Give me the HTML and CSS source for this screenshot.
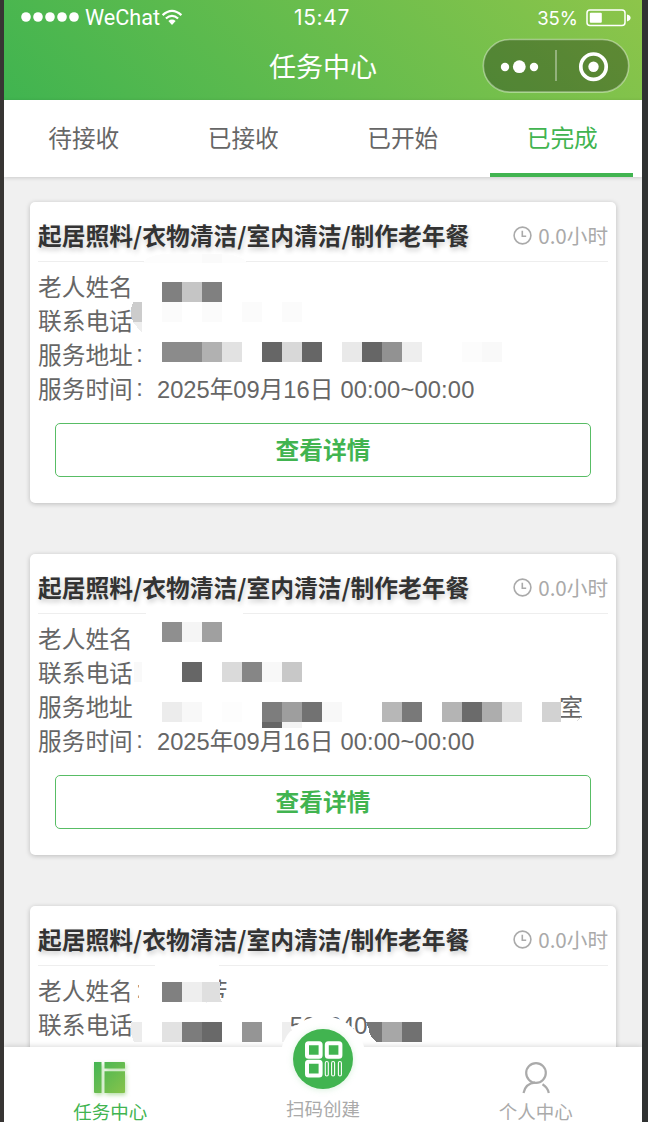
FILE: index.html
```html
<!DOCTYPE html>
<html lang="zh-CN">
<head>
<meta charset="utf-8">
<title>任务中心</title>
<link rel="stylesheet" href="styles.css">
</head>
<body>
<div class="phone">
  <header class="header">
    <div class="status">
      <div class="carrier">
        <svg width="58" height="10" viewBox="0 0 58 10" fill="#fff"><circle cx="5" cy="5" r="4.8"/><circle cx="17" cy="5" r="4.8"/><circle cx="29" cy="5" r="4.8"/><circle cx="41" cy="5" r="4.8"/><circle cx="53" cy="5" r="4.8"/></svg>
        <span class="carrier-name">WeChat</span>
        <svg class="wifi" width="22" height="17" viewBox="0 0 22 17" fill="none" stroke="#fff" stroke-width="2.3"><path d="M1.6 6.2Q11 -2.4 20.4 6.2M4.9 9.5Q11 4.2 17.1 9.5"/><path d="M7.4 12Q11 9.2 14.6 12L11 16Z" fill="#fff" stroke="none"/></svg>
      </div>
      <span class="time">15:47</span>
      <div class="battery">
        <span>35%</span>
        <svg width="46" height="18" viewBox="0 0 46 18"><rect x="1" y="1" width="38" height="15.6" rx="3" fill="none" stroke="#fff" stroke-width="1.5"/><rect x="3.8" y="3.8" width="12" height="10" rx="1" fill="#fff"/><path d="M41 5.4Q44.6 6 44.6 8.8T41 12.4Z" fill="#fff"/></svg>
      </div>
    </div>
    <div class="nav">
      <h1 class="nav-title">任务中心</h1>
      <svg class="capsule" width="148" height="56" viewBox="0 0 148 56"><rect x="1.3" y="1.5" width="145.4" height="52.6" rx="26.3" fill="#000" fill-opacity=".3" stroke="#fff" stroke-opacity=".38" stroke-width="1.6"/><g fill="#fff"><circle cx="23" cy="29" r="4.2"/><circle cx="37.3" cy="28.7" r="6.4"/><circle cx="52" cy="29" r="4.2"/><circle cx="111.5" cy="28.7" r="5.2"/></g><circle cx="111.5" cy="28.7" r="12.7" fill="none" stroke="#fff" stroke-width="3.7"/><path d="M74 12V43" stroke="#fff" stroke-opacity=".45" stroke-width="1.6"/></svg>
    </div>
  </header>
  <nav class="tabs">
    <div class="tab">待接收</div>
    <div class="tab">已接收</div>
    <div class="tab">已开始</div>
    <div class="tab active">已完成</div>
  </nav>
  <main class="list">
    <section class="card">
      <div class="card-head">
        <h2>起居照料/衣物清洁/室内清洁/制作老年餐</h2>
        <div class="hours"><svg width="19" height="19" viewBox="0 0 19 19" fill="none" stroke="#aaa" stroke-width="1.6"><circle cx="9.5" cy="9.5" r="8.4"/><path d="M9.3 4.8V10.3H13.2"/></svg><span>0.0小时</span></div>
      </div>
      <div class="rows">
        <div class="row">老人姓名</div>
        <div class="row">联系电话</div>
        <div class="row">服务地址<i>:</i></div>
        <div class="row">服务时间<i>:</i><span class="date">2025年09月16日</span><span class="clock">00:00~00:00</span></div>
      </div>
      <button class="detail">查看详情</button>
      <svg class="mask" viewBox="30 202 586 301" width="586" height="301" shape-rendering="crispEdges">
        <path d="M142 263Q148 255 165 254H225Q240 255 248 263Z" fill="#fdfdfd"/>
        <path d="M202 254h20v9h-20z" fill="#fafafa"/>
        <path d="M133 302h9v20h-9q-4-10 0-20z" fill="#ccc"/><path d="M133 322h9v11z" fill="#eee"/>
        <path d="M162 282h20v20h-20zM202 282h20v20h-20z" fill="#808080"/><path d="M182 282h20v20h-20z" fill="#c5c5c5"/>
        <path d="M162 302h20v20h-20zM202 302h20v20h-20zM242 302h20v20h-20zM282 302h20v20h-20z" fill="#fbfbfb"/>
        <path d="M162 342h40v20h-40z" fill="#8b8b8b"/><path d="M202 342h20v20h-20z" fill="#b1b1b1"/><path d="M222 342h20v20h-20z" fill="#e2e2e2"/>
        <path d="M262 342h20v20h-20zM302 342h20v20h-20zM362 342h20v20h-20z" fill="#666"/><path d="M282 342h20v20h-20z" fill="#d8d8d8"/><path d="M342 342h20v20h-20z" fill="#e9e9e9"/><path d="M382 342h20v20h-20z" fill="#929292"/><path d="M402 342h20v20h-20z" fill="#eee"/><path d="M462 342h40v20h-40z" fill="#fcfcfc"/><path d="M482 342h20v20h-20z" fill="#f9f9f9"/>
      </svg>
    </section>
    <section class="card">
      <div class="card-head">
        <h2>起居照料/衣物清洁/室内清洁/制作老年餐</h2>
        <div class="hours"><svg width="19" height="19" viewBox="0 0 19 19" fill="none" stroke="#aaa" stroke-width="1.6"><circle cx="9.5" cy="9.5" r="8.4"/><path d="M9.3 4.8V10.3H13.2"/></svg><span>0.0小时</span></div>
      </div>
      <div class="rows">
        <div class="row">老人姓名</div>
        <div class="row">联系电话</div>
        <div class="row split"><span>服务地址</span><span class="room">室</span></div>
        <div class="row">服务时间<i>:</i><span class="date">2025年09月16日</span><span class="clock">00:00~00:00</span></div>
      </div>
      <button class="detail">查看详情</button>
      <svg class="mask" viewBox="30 554 586 301" width="586" height="301" shape-rendering="crispEdges">
        <path d="M146 611h97v4h-97z" fill="#fff"/>
        <path d="M162 622h20v20h-20z" fill="#8f8f8f"/><path d="M182 622h20v20h-20z" fill="#f5f5f5"/><path d="M202 622h20v20h-20z" fill="#a0a0a0"/>
        <path d="M134 662h8v20h-8z" fill="#f9f9f9"/><path d="M182 662h20v20h-20z" fill="#666"/><path d="M222 662h20v20h-20z" fill="#dadada"/><path d="M242 662h20v20h-20z" fill="#868686"/><path d="M262 662h20v20h-20z" fill="#f8f8f8"/><path d="M282 662h20v20h-20z" fill="#c8c8c8"/>
        <path d="M162 702h20v20h-20z" fill="#ececec"/><path d="M182 702h20v20h-20zM322 702h20v20h-20z" fill="#f8f8f8"/><path d="M222 702h20v20h-20z" fill="#fdfdfd"/><path d="M262 702h20v20h-20z" fill="#7d7d7d"/><path d="M282 702h20v20h-20z" fill="#9e9e9e"/><path d="M302 702h20v20h-20z" fill="#727272"/><path d="M262 722h20v6h-20z" fill="#666"/><path d="M282 722h20v6h-20z" fill="#f3f3f3"/>
        <path d="M382 702h20v20h-20z" fill="#b7b7b7"/><path d="M402 702h20v20h-20z" fill="#797979"/><path d="M442 702h20v20h-20z" fill="#b4b4b4"/><path d="M462 702h20v20h-20z" fill="#6b6b6b"/><path d="M482 702h20v20h-20z" fill="#adadad"/><path d="M502 702h20v20h-20z" fill="#e1e1e1"/><path d="M542 702h19v20h-19z" fill="#d2d2d2"/>
        <path d="M577 721L581 717" stroke="#ddd"/>
      </svg>
    </section>
    <section class="card">
      <div class="card-head">
        <h2>起居照料/衣物清洁/室内清洁/制作老年餐</h2>
        <div class="hours"><svg width="19" height="19" viewBox="0 0 19 19" fill="none" stroke="#aaa" stroke-width="1.6"><circle cx="9.5" cy="9.5" r="8.4"/><path d="M9.3 4.8V10.3H13.2"/></svg><span>0.0小时</span></div>
      </div>
      <div class="rows">
        <div class="row">老人姓名<i>:</i><span class="surname">芳</span></div>
        <div class="row">联系电话<span class="number">5000409</span></div>
      </div>
      <svg class="mask" viewBox="30 906 586 301" width="586" height="301" shape-rendering="crispEdges">
        <path d="M155 963h64v4h-64z" fill="#fff"/><path d="M139 974h80v28h-80zM219 998h10v6h-10z" fill="#fff"/>
        <path d="M162 982h20v20h-20z" fill="#808080"/><path d="M182 982h20v20h-20z" fill="#eee"/><path d="M202 982h18v16l2 4h-20z" fill="#dfdfdf"/>
        <path d="M131 1022h11v20h-8q-5-10-3-20z" fill="#ececec"/><path d="M162 1022h20v20h-20z" fill="#e2e2e2"/><path d="M182 1022h20v20h-20z" fill="#7c7c7c"/><path d="M202 1022h20v20h-20z" fill="#696969"/><path d="M242 1022h20v20h-20z" fill="#959595"/><path d="M282 1022h9v20h-9z" fill="#eee"/>
        <path d="M365 1012h20v34h-8l-9-12z" fill="#fff"/>
        <path d="M366 1022h16v20h-6q-7-6-7-13z" fill="#777"/><path d="M382 1022h20v20h-20z" fill="#a7a7a7"/><path d="M402 1022h20v20h-20z" fill="#717171"/>
      </svg>
    </section>
  </main>
  <footer class="tabbar">
    <div class="bar-item on">
      <svg class="tasks" width="34" height="34" viewBox="0 0 34 34"><defs><linearGradient id="leaf" x1="0" y1="0" x2="1" y2="1"><stop offset="0" stop-color="#44b553"/><stop offset="1" stop-color="#87c34b"/></linearGradient></defs><path d="M1 1H8.5V32H2Q1 32 1 31ZM11.5 1H31Q32 1 32 2V7.5H11.5ZM11.5 10.3H32V31Q32 32 31 32H11.5Z" fill="url(#leaf)"/></svg>
      <span>任务中心</span>
    </div>
    <div class="bar-item scan">
      <svg class="scan-icon" width="88" height="88" viewBox="0 0 88 88"><circle cx="44" cy="44" r="43" fill="#fff"/><circle class="scan-disc" cx="44" cy="44" r="30" fill="#41b450"/><g fill="none" stroke="#fff" stroke-width="4"><rect x="28" y="28.2" width="13.6" height="13.6" rx="1.5"/><rect x="47.8" y="28.2" width="13.6" height="13.6" rx="1.5"/><rect x="28" y="46.8" width="13.6" height="13.6" rx="1.5"/></g><g fill="#41b450" stroke="#fff" stroke-width="1.1"><rect x="46.3" y="46.5" width="3" height="14.5" rx="1.5"/><rect x="52.6" y="46.5" width="3" height="14.5" rx="1.5"/><rect x="59.4" y="46.5" width="3" height="14.5" rx="1.5"/></g></svg>
      <span>扫码创建</span>
    </div>
    <div class="bar-item">
      <svg width="30" height="34" viewBox="0 0 30 34" fill="none" stroke="#aaa" stroke-width="2.2"><circle cx="15" cy="12" r="9.8"/><path d="M2.5 32Q4.5 22.5 14 21.7M21.5 23.2Q26.8 26.5 27.8 32"/></svg>
      <span>个人中心</span>
    </div>
  </footer>
</div>
</body>
</html>
```
FILE: styles.css
```css
* { box-sizing: border-box; }
body {
  margin: 0;
  width: 648px;
  height: 1122px;
  padding: 0 6px 0 4px;
  overflow: hidden;
  background: linear-gradient(90deg, #373533 50%, #303232 50%);
  font-family: "Liberation Sans", "Noto Sans CJK SC", sans-serif;
}
svg { flex: none; }
.phone {
  position: relative;
  width: 638px;
  height: 1122px;
  display: flex;
  flex-direction: column;
  overflow: hidden;
  background: #f0f0f0;
}
.header {
  height: 100px;
  flex: none;
  color: #fff;
  background: linear-gradient(45deg, #40b450, #8dc54a);
}
.status {
  display: grid;
  grid-template-columns: 1fr auto 1fr;
  height: 35px;
  padding: 0 12px 1px 17px;
  align-items: center;
  font-family: Inter, sans-serif;
}
.carrier { display: flex; align-items: center; font-size: 20px; }
.carrier-name { margin-left: 6px; font-family: Roboto, sans-serif; font-size: 21.6px; }
.wifi { margin-left: 1px; }
.time { font-size: 21px; letter-spacing: .6px; margin-right: 7px; }
.battery { display: flex; align-items: center; justify-content: flex-end; gap: 8px; font-size: 18.5px; padding-top: 1px; margin-right: -2px; }
.nav {
  position: relative;
  height: 65px;
  display: flex;
  justify-content: center;
}
.nav-title { margin: 0; font-size: 27px; font-weight: 400; line-height: 66px; }
.capsule { position: absolute; right: 12px; top: 3px; }
.tabs {
  display: flex;
  flex: none;
  height: 77px;
  background: #fff;
  box-shadow: 0 1px 4px rgba(0, 0, 0, .16);
}
.tab {
  position: relative;
  flex: 1;
  text-align: center;
  color: #666;
  font-size: 23.7px;
  line-height: 78px;
}
.active { color: #41b450; }
.active::after {
  content: "";
  position: absolute;
  left: 7.5px;
  right: 9px;
  bottom: .5px;
  height: 3.5px;
  background: #41b450;
}
.list { padding: 25px 26px 0; display: flex; flex-direction: column; gap: 51px; }
.card {
  position: relative;
  flex: none;
  height: 301px;
  padding: 8px 8px 0;
  border-radius: 5px;
  background: #fff;
  box-shadow: 0 1px 5px rgba(0, 0, 0, .22);
}
.card-head {
  display: flex;
  justify-content: space-between;
  height: 52px;
  border-bottom: 1.6px solid #eee;
}
.card-head h2 {
  margin: 0;
  font: 700 23.75px/50px "Noto Sans CJK SC", sans-serif;
  color: #333;
  text-shadow: 1px 3px 5px rgba(0, 0, 0, .2);
  white-space: nowrap;
}
.hours { display: flex; align-items: center; height: 50px; gap: 6px; color: #aaa; font: 20.6px "Noto Sans CJK SC", sans-serif; }
.hours span { line-height: 50px; }
.rows { padding-top: 9px; }
.row {
  display: flex;
  height: 34px;
  line-height: 34px;
  font-size: 23.7px;
  color: #666;
  white-space: nowrap;
}
.row i { width: 24.2px; padding-left: 3.5px; font-style: normal; line-height: 31px; }
.clock { margin-left: 7px; letter-spacing: .15px; }
.split { justify-content: space-between; padding-right: 25px; }
.surname { margin-left: 47px; }
.number { margin-left: 157px; letter-spacing: -.3px; }
.detail {
  display: block;
  width: 536px;
  height: 54px;
  margin: 16px 0 0 17px;
  padding: 0 0 2px;
  border: 1px solid #58bd65;
  border-radius: 5px;
  background: transparent;
  color: #41b450;
  font: 700 23.7px "Noto Sans CJK SC", sans-serif;
}
.mask { position: absolute; left: 0; top: 0; }
.tabbar {
  position: absolute;
  left: 0;
  right: 0;
  bottom: 0;
  height: 75px;
  display: flex;
  background: #fff;
  box-shadow: 0 -1px 5px rgba(0, 0, 0, .14);
}
.bar-item {
  flex: 1;
  display: flex;
  flex-direction: column;
  align-items: center;
  padding-top: 14px;
  color: #aaa;
  font-size: 18.5px;
  line-height: 36px;
}
.on { color: #41b450; }
.tasks { filter: drop-shadow(1px 2px 2px rgba(110, 190, 80, .5)); }
.scan { position: relative; padding-top: 45px; }
.scan-icon { position: absolute; top: -32px; }
.scan-disc { filter: drop-shadow(0 1px 3px rgba(65, 180, 80, .2)); }
.scan span { position: relative; }
```
